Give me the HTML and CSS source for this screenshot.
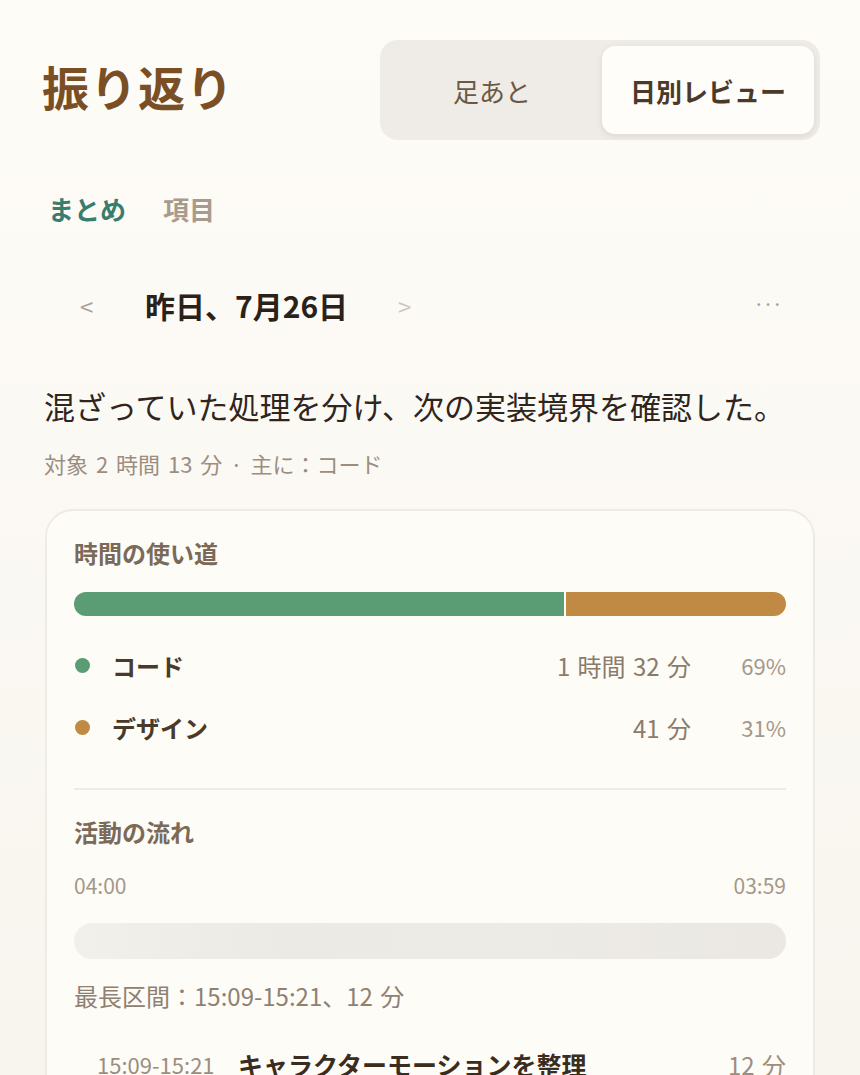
FILE: index.html
```html
<!DOCTYPE html>
<html lang="ja">
<head>
<meta charset="utf-8">
<title>振り返り</title>
<link rel="stylesheet" href="styles.css">
</head>
<body>
<div class="page">
  <header class="header">
    <h1 class="title">振り返り</h1>
    <div class="segmented">
      <div class="seg">足あと</div>
      <div class="seg seg-active">日別レビュー</div>
    </div>
  </header>

  <nav class="tabs">
    <span class="tab tab-active">まとめ</span>
    <span class="tab">項目</span>
  </nav>

  <div class="datenav">
    <span class="arrow">&lt;</span>
    <span class="date">昨日、7月26日</span>
    <span class="arrow arrow-next">&gt;</span>
    <span class="more">···</span>
  </div>

  <p class="summary">混ざっていた処理を分け、次の実装境界を確認した。</p>
  <p class="meta">対象 2 時間 13 分 · 主に：コード</p>

  <section class="card">
    <h2 class="card-title">時間の使い道</h2>
    <div class="bar">
      <div class="bar-seg bar-code" style="width:69%"></div>
      <div class="bar-seg bar-design" style="width:31%"></div>
    </div>
    <div class="rows">
      <div class="row">
        <span class="dot dot-code"></span>
        <span class="row-name">コード</span>
        <span class="row-time">1 時間 32 分</span>
        <span class="row-pct">69%</span>
      </div>
      <div class="row">
        <span class="dot dot-design"></span>
        <span class="row-name">デザイン</span>
        <span class="row-time">41 分</span>
        <span class="row-pct">31%</span>
      </div>
    </div>

    <div class="divider"></div>

    <h2 class="card-title">活動の流れ</h2>
    <div class="axis">
      <span>04:00</span>
      <span>03:59</span>
    </div>
    <div class="timeline"></div>
    <p class="longest">最長区間：15:09-15:21、12 分</p>

    <div class="entry">
      <span class="entry-time">15:09-15:21</span>
      <span class="entry-name">キャラクターモーションを整理</span>
      <span class="entry-dur">12 分</span>
    </div>
  </section>
</div>
</body>
</html>
```

FILE: styles.css
```css
* { box-sizing: border-box; }
html, body { margin: 0; padding: 0; }
body {
  background: linear-gradient(#fefcf7, #f8f5ef);
  min-height: 1075px;
  font-family: "Noto Sans CJK JP", "Noto Sans", sans-serif;
  color: #2b2119;
}
.page {
  padding: 40px 45px 0 44px;
  height: 1075px;
  overflow: hidden;
}
.header {
  display: flex;
  align-items: center;
  justify-content: space-between;
  margin-right: -5px;
}
.title {
  margin: -10px 0 0 -2px;
  font-size: 47px;
  font-weight: 700;
  color: #7a4f25;
  letter-spacing: 1px;
}
.segmented {
  width: 440px;
  height: 100px;
  padding: 6px;
  background: #efebe6;
  border-radius: 18px;
  display: flex;
  gap: 4px;
}
.seg {
  flex: 1;
  display: flex;
  align-items: center;
  justify-content: center;
  font-size: 26px;
  color: #6b5946;
  border-radius: 13px;
}
.seg-active {
  background: #fffdf9;
  font-weight: 700;
  color: #4b3a29;
  box-shadow: 0 2px 6px rgba(90, 70, 40, 0.12);
}
.tabs {
  display: flex;
  gap: 37px;
  margin-top: 51px;
  padding-left: 4px;
}
.tab {
  font-size: 26px;
  font-weight: 700;
  color: #a99b8b;
  line-height: 36px;
}
.tab-active { color: #3a7c6d; }

.datenav {
  display: flex;
  align-items: center;
  margin-top: 58px;
  padding-left: 36px;
  padding-right: 31px;
  height: 40px;
}
.arrow {
  font-size: 24px;
  color: #aaa29a;
  width: 16px;
}
.arrow-next { color: #cfc8c0; margin-left: 50px; }
.date {
  margin-left: 49px;
  font-size: 30px;
  font-weight: 700;
  color: #2b2119;
}
.more {
  margin-left: auto;
  margin-top: -4px;
  margin-right: 3px;
  font-size: 20px;
  color: #aaa29a;
  letter-spacing: -2px;
}
.summary {
  margin: 59px 0 0 0;
  font-size: 31px;
  line-height: 44px;
  color: #30251c;
}
.meta {
  margin: 20px 0 0 0;
  font-size: 22px;
  line-height: 30px;
  word-spacing: 3px;
  color: #9b8e80;
}
.card {
  margin-top: 31px;
  margin-left: 1px;
  border: 2px solid #efebe4;
  border-radius: 28px;
  background: #fefcf7;
  padding: 26px 27px 40px;
}
.card-title {
  margin: 0;
  font-size: 24px;
  font-weight: 700;
  color: #7b6a58;
  line-height: 32px;
}
.bar {
  display: flex;
  gap: 2px;
  height: 24px;
  margin-top: 23px;
  border-radius: 12px;
  overflow: hidden;
}
.bar-code { background: #5a9c74; }
.bar-design { background: #c08a44; }
.rows {
  margin-top: 18px;
}
.row {
  display: flex;
  align-items: center;
  height: 62px;
}
.dot {
  width: 15px;
  height: 15px;
  border-radius: 50%;
  margin-left: 1px;
}
.dot-code { background: #5a9c74; }
.dot-design { background: #c08a44; }
.row-name {
  margin-left: 22px;
  font-size: 24px;
  font-weight: 700;
  color: #4a3a2a;
}
.row-time {
  margin-left: auto;
  font-size: 24px;
  word-spacing: 2px;
  color: #8a7b6b;
}
.row-pct {
  width: 95px;
  text-align: right;
  font-size: 22px;
  color: #a59889;
}
.divider {
  height: 2px;
  background: #efebe4;
  margin: 30px 0 26px;
}
.axis {
  display: flex;
  justify-content: space-between;
  margin-top: 22px;
  font-size: 21px;
  color: #a59889;
}
.timeline {
  margin-top: 23px;
  height: 36px;
  border-radius: 18px;
  background: linear-gradient(90deg, #f2f0eb 0%, #efede8 15%, #eceae5 30%, #edebe6 60%, #ebe8e3 100%);
}
.longest {
  margin: 22px 0 0 0;
  font-size: 24px;
  line-height: 30px;
  word-spacing: 2px;
  color: #8f8172;
}
.entry {
  display: flex;
  align-items: center;
  margin-top: 35px;
  padding-left: 23px;
}
.entry-time {
  font-size: 22px;
  color: #9b8e80;
  width: 141px;
}
.entry-name {
  font-size: 25px;
  font-weight: 700;
  color: #3a2d20;
}
.entry-dur {
  margin-left: auto;
  font-size: 24px;
  word-spacing: 2px;
  color: #9b8e80;
}
```
